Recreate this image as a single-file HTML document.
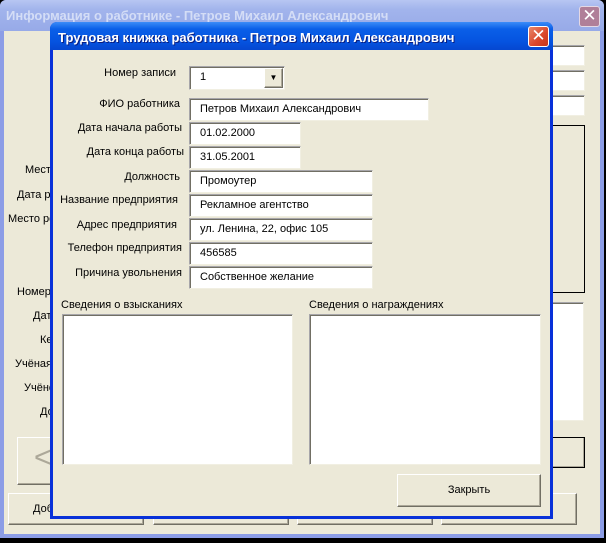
<!DOCTYPE html>
<html><head><meta charset="utf-8"><style>
*{margin:0;padding:0;box-sizing:border-box}
body{width:606px;height:543px;background:#000;position:relative;overflow:hidden;font-family:"Liberation Sans","DejaVu Sans",sans-serif;font-size:11px;color:#000}
.a{position:absolute}
.bw{left:0;top:0;width:604px;height:538px;background:#8c9de6;border-radius:6px 6px 0 0}
.btitle{left:0;top:0;width:604px;height:31px;border-radius:6px 6px 0 0;background:linear-gradient(#b7c6f2,#a2b4ec 30%,#97aae8)}
.bbody{left:4px;top:31px;width:596px;height:503px;background:#ece9d8}
.sunk{background:#fff;border:1px solid;border-color:#a7a6aa #f1efe2 #f1efe2 #a7a6aa;box-shadow:inset 1px 1px 0 #716f64}
.btn{background:#ece9d8;border:1px solid;border-color:#fff #716f64 #716f64 #fff;box-shadow:inset -1px -1px 0 #aca899}
.lbl{text-align:right;width:180px;left:0;white-space:nowrap}
.fld{padding-left:10px;line-height:21px;white-space:nowrap}
</style></head><body>
<div class="a bw"></div>
<div class="a btitle"></div>
<div class="a" style="left:6px;top:8px;font-size:13px;font-weight:bold;color:#d4ddf6">Информация о работнике - Петров Михаил Александрович</div>
<div class="a" style="left:579px;top:6px;width:21px;height:21px;background:#b07f98;border:1px solid #e4d8e4;border-radius:3px;color:#fff;font-weight:bold;font-size:17px;text-align:center;line-height:18px">✕</div>
<div class="a bbody"></div>
<div class="a sunk" style="left:540px;top:45px;width:45px;height:21px"></div>
<div class="a sunk" style="left:540px;top:70px;width:45px;height:21px"></div>
<div class="a sunk" style="left:540px;top:95px;width:45px;height:21px"></div>
<div class="a" style="left:540px;top:125px;width:45px;height:168px;border:1px solid #000"></div>
<div class="a sunk" style="left:540px;top:302px;width:44px;height:119px"></div>
<div class="a btn" style="left:540px;top:437px;width:45px;height:31px;border:1px solid #000"></div>
<div class="a btn" style="left:17px;top:437px;width:40px;height:48px;color:#aca899;font-size:30px;line-height:40px;padding-left:16px">&lt;</div>
<div class="a btn" style="left:8px;top:493px;width:136px;height:32px;padding:9px 0 0 24px">Добавить</div>
<div class="a btn" style="left:153px;top:493px;width:136px;height:32px"></div>
<div class="a btn" style="left:297px;top:493px;width:136px;height:32px"></div>
<div class="a btn" style="left:441px;top:493px;width:136px;height:32px"></div>
<div class="a" style="left:25px;top:164px">Место</div>
<div class="a" style="left:17px;top:189px">Дата рождения</div>
<div class="a" style="left:8px;top:213px">Место рождения</div>
<div class="a" style="left:17px;top:286px">Номер</div>
<div class="a" style="left:33px;top:310px">Дата</div>
<div class="a" style="left:40px;top:334px">Кем</div>
<div class="a" style="left:15px;top:358px">Учёная</div>
<div class="a" style="left:24px;top:382px">Учёное</div>
<div class="a" style="left:40px;top:406px">Должн</div>
<div class="a" style="left:50px;top:22px;width:503px;height:497px;background:#0831d9;border-radius:7px 7px 0 0"></div>
<div class="a" style="left:50px;top:22px;width:503px;height:28px;border-radius:7px 7px 0 0;background:linear-gradient(#3c8cf8,#0a5fe8 25%,#0553e0 70%,#0547d0)"></div>
<div class="a" style="left:58px;top:30px;font-size:13px;font-weight:bold;color:#fff;text-shadow:1px 1px 0 #0a1e80">Трудовая книжка работника - Петров Михаил Александрович</div>
<div class="a" style="left:528px;top:26px;width:21px;height:21px;background:linear-gradient(135deg,#e8876a,#d9452a 60%,#c4361c);border:1px solid #fff;border-radius:3px;color:#fff;font-weight:bold;font-size:17px;text-align:center;line-height:18px">✕</div>
<div class="a" style="left:53px;top:50px;width:497px;height:466px;background:#ece9d8"></div>
<div class="a lbl" style="left:0;width:176px;top:67px">Номер записи</div>
<div class="a sunk fld" style="left:189px;top:66px;width:96px;height:24px;line-height:21px">1</div>
<div class="a btn" style="left:264px;top:68px;width:19px;height:20px;font-size:8px;text-align:center;line-height:18px">▼</div>
<div class="a lbl" style="top:98px">ФИО работника</div>
<div class="a lbl" style="top:122px;width:182px">Дата начала работы</div>
<div class="a lbl" style="top:146px;width:184px">Дата конца работы</div>
<div class="a lbl" style="top:171px">Должность</div>
<div class="a lbl" style="top:194px;width:178px">Название предприятия</div>
<div class="a lbl" style="top:219px;width:177px">Адрес предприятия</div>
<div class="a lbl" style="top:242px;width:182px">Телефон предприятия</div>
<div class="a lbl" style="top:267px;width:182px">Причина увольнения</div>
<div class="a sunk fld" style="left:189px;top:98px;width:240px;height:23px">Петров Михаил Александрович</div>
<div class="a sunk fld" style="left:189px;top:122px;width:112px;height:23px">01.02.2000</div>
<div class="a sunk fld" style="left:189px;top:146px;width:112px;height:23px">31.05.2001</div>
<div class="a sunk fld" style="left:189px;top:170px;width:184px;height:23px">Промоутер</div>
<div class="a sunk fld" style="left:189px;top:194px;width:184px;height:23px">Рекламное агентство</div>
<div class="a sunk fld" style="left:189px;top:218px;width:184px;height:23px">ул. Ленина, 22, офис 105</div>
<div class="a sunk fld" style="left:189px;top:242px;width:184px;height:23px">456585</div>
<div class="a sunk fld" style="left:189px;top:266px;width:184px;height:23px">Собственное желание</div>
<div class="a" style="left:61px;top:299px">Сведения о взысканиях</div>
<div class="a" style="left:309px;top:299px">Сведения о награждениях</div>
<div class="a sunk" style="left:62px;top:314px;width:231px;height:151px"></div>
<div class="a sunk" style="left:309px;top:314px;width:232px;height:151px"></div>
<div class="a btn" style="left:397px;top:474px;width:144px;height:33px;text-align:center;line-height:31px">Закрыть</div>
</body></html>
